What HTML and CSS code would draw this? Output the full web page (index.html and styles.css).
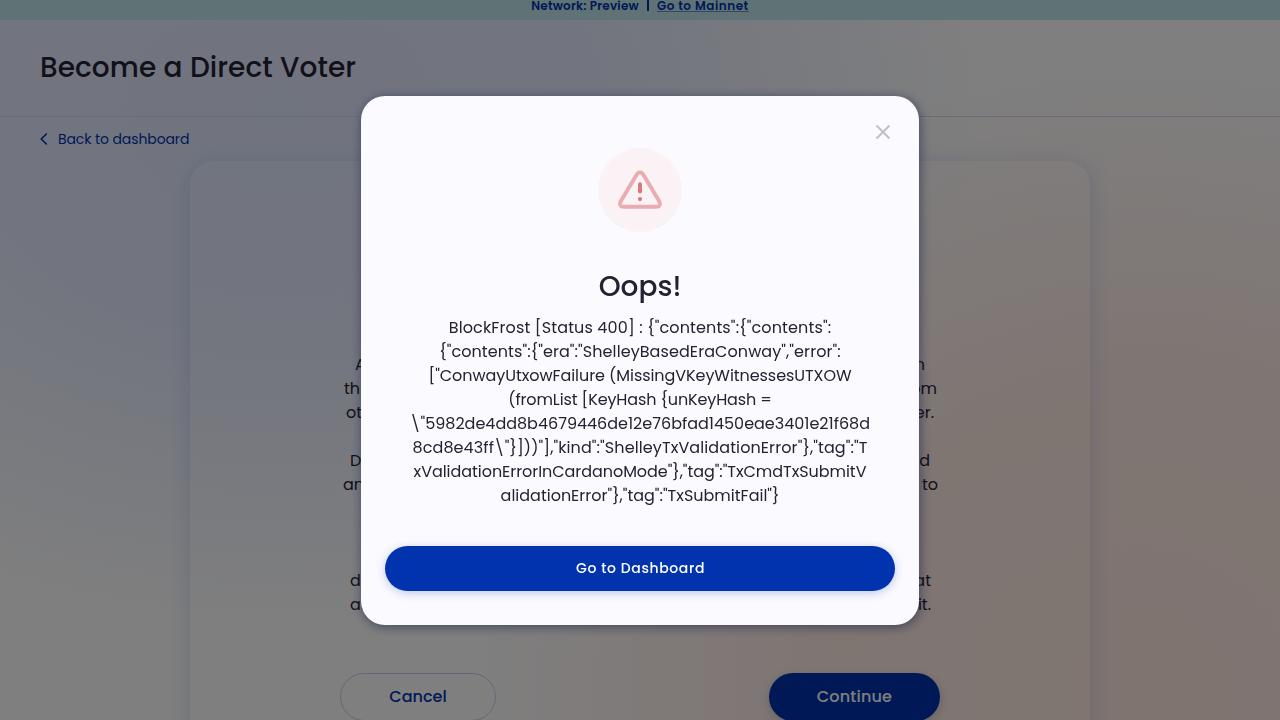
FILE: index.html
```
<!DOCTYPE html>
<html lang="en">
<head>
<meta charset="utf-8">
<title>Become a Direct Voter</title>
<link rel="stylesheet" href="styles.css">
</head>
<body>
<div class="page">
  <div class="banner"><span class="network">Network: Preview</span><span class="divider"></span><a class="mainnet">Go to Mainnet</a></div>
  <header class="header"><h1 class="title">Become a Direct Voter</h1></header>
  <nav class="back">
    <svg class="chevron" width="8" height="12" viewBox="0 0 8 12"><path d="M6.3 1 1.2 6l5.1 5" fill="none" stroke="#0033ad" stroke-width="1.6" stroke-linecap="round" stroke-linejoin="round"/></svg>
    <a class="back-link">Back to dashboard</a>
  </nav>
  <main class="card">
    <div class="copy">
      <p class="row r1"><span>A</span><span>n</span></p>
      <p class="row r2"><span>th</span><span>om</span></p>
      <p class="row r3"><span>ot</span><span>er.</span></p>
      <p class="row r4"><span>D</span><span>d</span></p>
      <p class="row r5"><span>an</span><span>to</span></p>
      <p class="row r6"><span>de</span><span>at</span></p>
      <p class="row r7"><span>an</span><span>it.</span></p>
    </div>
    <div class="actions">
      <button class="btn cancel"><span>Cancel</span></button>
      <button class="btn continue"><span>Continue</span></button>
    </div>
  </main>
</div>
<div class="overlay">
  <section class="modal">
    <svg class="close" width="16" height="16" viewBox="0 0 16 16"><path d="M1.5 1.5l13 13M14.5 1.5l-13 13" stroke="#c1c1c3" stroke-width="2" fill="none"/></svg>
    <svg class="warning" width="84" height="84" viewBox="0 0 84 84">
      <circle cx="42" cy="42" r="42" fill="#fbf2f5"/>
      <path d="M38.9 26.2 22.6 53.4Q20.5 58.8 26 58.8H58Q63.5 58.8 61.4 53.4L45.1 26.2Q42 22.3 38.9 26.2Z" fill="none" stroke="#e9acb1" stroke-width="3.9" stroke-linejoin="round"/>
      <path d="M42 36.2v7.3" stroke="#dd7680" stroke-width="4" stroke-linecap="round"/>
      <circle cx="42" cy="51.1" r="2.1" fill="#dd7680"/>
    </svg>
    <h2 class="oops">Oops!</h2>
    <div class="message">
      <p class="m1">BlockFrost [Status 400] : {"contents":{"contents":</p>
      <p class="m2">{"contents":{"era":"ShelleyBasedEraConway","error":</p>
      <p class="m3">["ConwayUtxowFailure (MissingVKeyWitnessesUTXOW</p>
      <p class="m4">(fromList [KeyHash {unKeyHash =</p>
      <p class="m5">\"5982de4dd8b4679446de12e76bfad1450eae3401e21f68d</p>
      <p class="m6">8cd8e43ff\"}]))"],"kind":"ShelleyTxValidationError"},"tag":"T</p>
      <p class="m7">xValidationErrorInCardanoMode"},"tag":"TxCmdTxSubmitV</p>
      <p class="m8">alidationError"},"tag":"TxSubmitFail"}</p>
    </div>
    <button class="dashboard"><span>Go to Dashboard</span></button>
  </section>
</div>
</body>
</html>
```
FILE: styles.css
```
* { box-sizing: border-box; }
body {
  margin: 0;
  height: 720px;
  overflow: hidden;
  font-family: Poppins, Inter, "Open Sans", sans-serif;
  color: #242232;
}
h1, h2, p { margin: 0; font-weight: 400; }
button { font: inherit; border: 0; padding: 0; }

.page {
  height: 720px;
  overflow: hidden;
  background:
    radial-gradient(ellipse 660px 620px at 1140px 690px, #ffe8e0 0%, rgba(255, 232, 224, .85) 50%, rgba(255, 242, 234, 0) 100%),
    radial-gradient(ellipse 700px 510px at 280px 110px, #e1e8ff 0%, rgba(226, 233, 255, .9) 45%, rgba(240, 246, 255, 0) 100%),
    #fefefe;
}
.banner {
  height: 20px;
  display: flex;
  justify-content: center;
  align-items: flex-start;
  background: #bfe4ec;
  color: #0033ad;
  font-size: 12px;
  line-height: 12px;
  font-weight: 600;
}
.network { letter-spacing: .22px; }
.divider { width: 2px; height: 11px; margin: 0 8px 0 8px; background: #0033ad; }
.mainnet { height: 12px; border-bottom: 1px solid #6c8fcb; letter-spacing: .52px; }
.header {
  height: 97px;
  padding: 27px 40px 0;
  border-bottom: 1px solid #d6d8f5;
}
.title { font-size: 28px; line-height: 42px; font-weight: 500; letter-spacing: .05px; }
.back {
  height: 44px;
  padding: 0 40px;
  display: flex;
  align-items: center;
  gap: 10px;
  color: #0033ad;
  font-size: 14px;
  letter-spacing: -.1px;
}
.card {
  width: 900px;
  height: 600px;
  margin: 0 auto;
  padding: 192px 150px 0;
  border-radius: 24px;
  background: rgba(255, 255, 255, .06);
  box-shadow: 0 3px 22px rgba(120, 145, 225, .3);
}
.copy { height: 320px; font-size: 16px; line-height: 24px; }
.row { display: flex; justify-content: space-between; }
.r1 { padding: 0 15px; }
.r2 { padding: 0 3px 0 4px; }
.r3 { padding: 0 6px; }
.r4 { padding: 0 10px; margin-top: 24px; }
.r5 { padding: 0 2px 0 3px; }
.r6 { padding: 0 9px 0 10px; margin-top: 72px; }
.r7 { padding: 0 9px 0 10px; }
.actions { display: flex; justify-content: space-between; }
.btn { height: 48px; padding-bottom: 2px; border-radius: 24px; font-size: 16px; font-weight: 500; }
.cancel { width: 156px; border: 1px solid #cbcff0; background: transparent; color: #0033ad; }
.continue { width: 171px; background: #0033ad; color: #fff; letter-spacing: .2px; box-shadow: 0 3px 10px rgba(70, 90, 150, .3); }

.overlay {
  position: fixed;
  inset: 0;
  display: flex;
  justify-content: center;
  align-items: center;
  background: rgba(0, 0, 0, .5);
}
.modal {
  width: 558px;
  height: 529px;
  padding: 28px 24px 0;
  display: flex;
  flex-direction: column;
  align-items: center;
  border-radius: 24px;
  background: #fbfaff;
  box-shadow: 1px 2px 11px rgba(0, 18, 61, .5);
}
.close { align-self: flex-end; margin-right: 4px; }
.warning { margin-top: 8px; }
.oops { margin-top: 34px; font-size: 28px; line-height: 42px; font-weight: 500; }
.message { height: 192px; margin-top: 8px; font-size: 16px; line-height: 24px; text-align: center; white-space: nowrap; }
.m1 { letter-spacing: .13px; }
.m2 { letter-spacing: .08px; }
.m3 { letter-spacing: -.065px; }
.m4 { letter-spacing: -.12px; }
.m6 { letter-spacing: .1px; }
.m7 { letter-spacing: -.05px; }
.dashboard {
  width: 510px;
  height: 45px;
  margin-top: 38px;
  padding-left: 1px;
  border-radius: 23px;
  background: #0033ad;
  color: #fff;
  font-size: 14px;
  font-weight: 500;
  letter-spacing: .6px;
  box-shadow: 0 2px 10px rgba(0, 51, 173, .25);
}
```
